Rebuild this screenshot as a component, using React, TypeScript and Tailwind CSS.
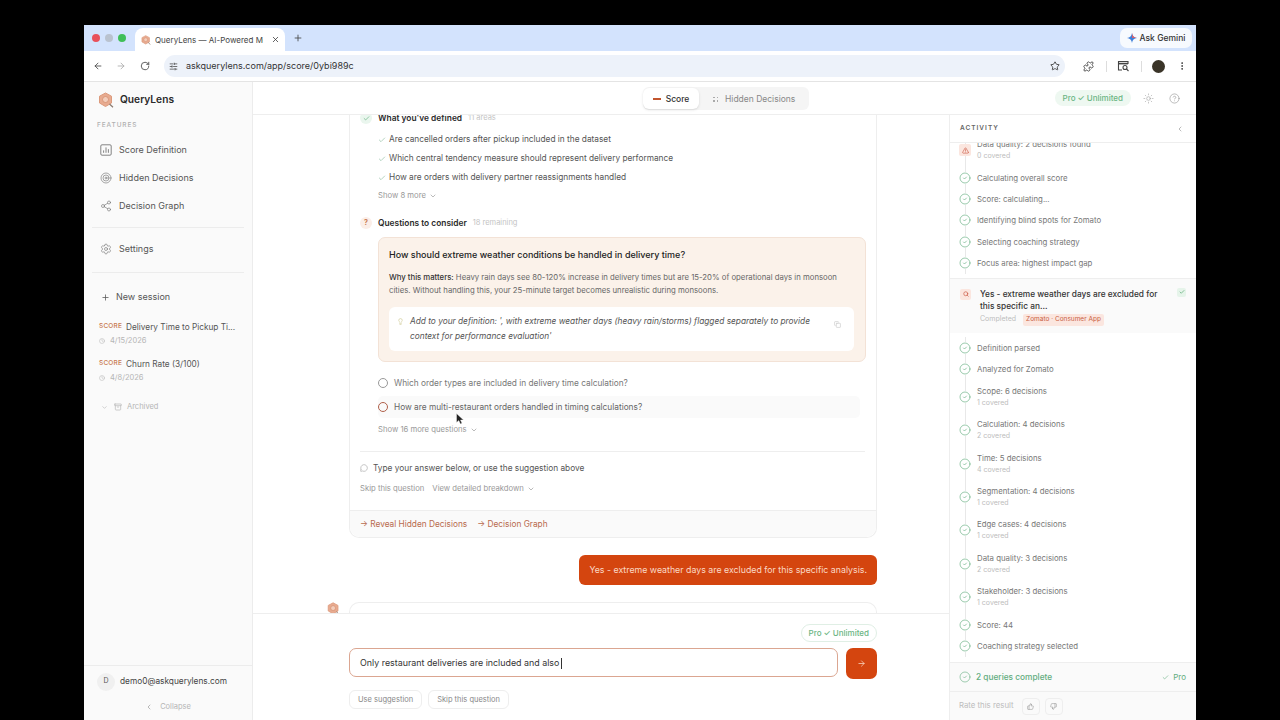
import React from 'react';
import {
  ArrowLeft, ArrowRight, Archive, Check, ChevronDown, ChevronLeft, CircleCheck, CircleHelp, Clock, Copy,
  EllipsisVertical, Lightbulb, MessageCircle, Plus, Puzzle, RotateCw, Search, Settings, Share2, SlidersHorizontal,
  Star, Sun, Target, ThumbsDown, ThumbsUp, TriangleAlert, X,
} from 'lucide-react';

const Logo = ({ size = 16 }: { size?: number }) => (
  <svg width={size} height={size} viewBox="0 0 16 16" fill="none">
    <path d="M7.5 1 L13.5 4.2 V11 L7.5 14.5 L1.5 11 V4.2 Z" fill="#e8ab90" stroke="#dc9a7c" strokeWidth="1" />
    <circle cx="7.5" cy="7.5" r="3" fill="#f3cdbb" stroke="#d08a6a" strokeWidth="0.7" />
    <path d="M11.5 12 L15 15.2" stroke="#8a7a70" strokeWidth="1.2" />
  </svg>
);

const ChartIcon = () => (
  <svg width="12" height="12" viewBox="0 0 12 12" fill="none" stroke="#777" strokeWidth="0.9">
    <rect x="0.8" y="0.8" width="10.4" height="10.4" rx="1.2" />
    <path d="M3.6 8.8V6.4M6 8.8V3.4M8.4 8.8V5.2" />
  </svg>
);

const TabSearchIcon = () => (
  <svg width="13" height="12" viewBox="0 0 13 12" fill="none" stroke="#444" strokeWidth="1.1">
    <path d="M5 10H1.5V1.5H11V4" />
    <path d="M1.5 3.6H11" strokeWidth="1.6" />
    <circle cx="8" cy="7.5" r="2" />
    <path d="M9.5 9L11.5 11" />
  </svg>
);

const NavItem = ({ icon, label }: { icon: React.ReactNode; label: string }) => (
  <div className="flex h-[28px] items-center pl-[16px] text-[9px] text-[#555]">
    <span className="flex w-[19px] shrink-0 items-center">{icon}</span>
    {label}
  </div>
);

const Session = ({ title, date }: { title: string; date: string }) => (
  <div className="flex h-[37px] flex-col pl-[15px]">
    <div className="flex h-[14px] items-center text-[8.25px] text-[#555]">
      <span className="mr-[4px] text-[6.5px] font-medium tracking-[0.2px] text-[#c8794f]">SCORE</span>
      {title}
    </div>
    <div className="mt-[1px] flex h-[12px] items-center text-[7.5px] text-[#b5b5b5]">
      <Clock size={6} className="mr-[5px]" />
      {date}
    </div>
  </div>
);

const Sidebar = () => (
  <aside className="flex w-[169px] shrink-0 flex-col border-r border-[#ececec] bg-[#fafafa]">
    <div className="flex h-[35px] items-center pl-[14px] pt-[1px] text-[10.2px] font-semibold text-[#2b2b2b]">
      <Logo />
      <span className="ml-[6px]">QueryLens</span>
    </div>
    <div className="mt-[3px] flex h-[12px] items-center pl-[13px] text-[6.5px] font-medium tracking-[0.9px] text-[#b0b0b0]">FEATURES</div>
    <div className="mt-[4px]">
      <NavItem icon={<ChartIcon />} label="Score Definition" />
      <NavItem icon={<Target size={12} color="#777" strokeWidth={1.3} />} label="Hidden Decisions" />
      <NavItem icon={<Share2 size={12} color="#777" strokeWidth={1.3} />} label="Decision Graph" />
    </div>
    <div className="mx-[8px] mt-[7px] h-px bg-[#ececec]" />
    <div className="mt-[7px]">
      <NavItem icon={<Settings size={12} color="#777" strokeWidth={1.3} />} label="Settings" />
    </div>
    <div className="mx-[8px] mt-[9px] h-px bg-[#ececec]" />
    <div className="mt-[14px] flex h-[20px] items-center pl-[17px] text-[9px] text-[#555]">
      <Plus size={9} color="#555" className="mr-[6px]" />
      New session
    </div>
    <div className="mt-[13px]">
      <Session title="Delivery Time to Pickup Ti..." date="4/15/2026" />
      <Session title="Churn Rate (3/100)" date="4/8/2026" />
    </div>
    <div className="mt-[6px] flex h-[14px] items-center pl-[17px] text-[7.5px] text-[#b5b5b5]">
      <ChevronDown size={7} className="mr-[6px]" />
      <Archive size={8} className="mr-[5px]" />
      Archived
    </div>
    <div className="mt-auto border-t border-[#ececec]">
      <div className="flex h-[31px] items-center pl-[13px] text-[8.3px] text-[#444]">
        <span className="mr-[5px] flex h-[18px] w-[18px] items-center justify-center rounded-full bg-[#f0f0f0] text-[7px] text-[#555]">D</span>
        demo0@askquerylens.com
      </div>
      <div className="flex h-[23px] items-center justify-center pb-[3px] text-[7.5px] text-[#b5b5b5]">
        <ChevronLeft size={8} className="mr-[7px] text-[#999]" />
        Collapse
      </div>
    </div>
  </aside>
);

const Chevron = () => <ChevronDown size={8} className="ml-[3px]" />;

const DefinedItem = ({ text }: { text: string }) => (
  <div className="flex h-[19px] items-center pl-[28px] text-[8.3px] text-[#555]">
    <Check size={8} color="#6aa984" className="mr-[3px]" strokeWidth={1.5} />
    {text}
  </div>
);

const Conversation = () => (
  <div className="relative min-h-0 flex-1 overflow-hidden">
    <div className="relative -mt-[4px] ml-[96px] w-[528px]">
      <div className="rounded-b-[10px] border-x border-b border-[#eeeeee]">
        <div className="flex h-[14px] items-center pl-[10px] text-[8.4px] font-semibold text-[#2a2a2a]">
          <span className="mr-[6px] flex h-[12px] w-[12px] items-center justify-center rounded-full bg-[#eaf6ee]">
            <Check size={7} color="#4fa36c" strokeWidth={2} />
          </span>
          What you've defined
          <span className="ml-[6px] text-[7.5px] font-normal text-[#c4c4c4]">11 areas</span>
        </div>
        <div className="mt-[5px]">
          <DefinedItem text="Are cancelled orders after pickup included in the dataset" />
          <DefinedItem text="Which central tendency measure should represent delivery performance" />
          <DefinedItem text="How are orders with delivery partner reassignments handled" />
        </div>
        <div className="mt-[2px] flex h-[14px] items-center pl-[28px] text-[7.7px] text-[#999]">
          Show 8 more
          <Chevron />
        </div>
        <div className="mt-[13px] flex h-[14px] items-center pl-[10px] text-[8.4px] font-semibold text-[#2a2a2a]">
          <span className="mr-[6px] flex h-[12px] w-[12px] items-center justify-center rounded-full bg-[#fbeee8] text-[7px] font-bold text-[#c8794f]">?</span>
          Questions to consider
          <span className="ml-[6px] text-[7.5px] font-normal text-[#c4c4c4]">18 remaining</span>
        </div>
        <div className="ml-[28px] mt-[7px] h-[125px] w-[488px] rounded-[7px] border border-[#f3e2d6] bg-[#fbf2ea] px-[10px]">
          <div className="mt-[10px] flex h-[14px] items-center text-[9px] font-medium text-[#222]">How should extreme weather conditions be handled in delivery time?</div>
          <div className="mt-[9px] text-[7.75px] leading-[13px] text-[#666]">
            <span className="font-medium text-[#333]">Why this matters:</span> Heavy rain days see 80-120% increase in delivery times but are 15-20% of operational days in monsoon cities. Without handling this, your 25-minute target becomes unrealistic during monsoons.
          </div>
          <div className="relative mt-[10px] h-[44px] w-[465px] rounded-[6px] bg-white pl-[21px] pr-[40px] pt-[7px] text-[8.3px] italic leading-[15px] text-[#555]">
            <Lightbulb size={7} color="#c9c48a" className="absolute left-[8px] top-[11px]" />
            Add to your definition: ', with extreme weather days (heavy rain/storms) flagged separately to provide context for performance evaluation'
            <Copy size={7} color="#c4c4c4" className="absolute right-[13px] top-[14px]" />
          </div>
        </div>
        <div className="mt-[10px] flex h-[22px] items-center pl-[28px] text-[8.3px] text-[#777]">
          <span className="mr-[6px] h-[10px] w-[10px] rounded-full border border-[#999]" />
          Which order types are included in delivery time calculation?
        </div>
        <div className="ml-[28px] mt-[2px] flex h-[22px] w-[482px] items-center rounded-[5px] bg-[#fafafa] text-[8.3px] text-[#666]">
          <span className="mr-[6px] h-[10px] w-[10px] rounded-full border border-[#b0604a]" />
          How are multi-restaurant orders handled in timing calculations?
        </div>
        <div className="mt-[5px] flex h-[14px] items-center pl-[28px] text-[7.7px] text-[#999]">
          Show 16 more questions
          <Chevron />
        </div>
        <div className="ml-[10px] mt-[14px] h-px w-[505px] bg-[#eeeeee]" />
        <div className="mt-[9px] flex h-[14px] items-center pl-[10px] text-[8.3px] text-[#555]">
          <MessageCircle size={8} color="#aaa" className="mr-[5px]" />
          Type your answer below, or use the suggestion above
        </div>
        <div className="mt-[7px] flex h-[14px] items-center pl-[10px] text-[7.7px] text-[#999]">
          <span className="mr-[8px]">Skip this question</span>
          View detailed breakdown
          <Chevron />
        </div>
        <div className="mt-[14px] flex h-[27px] items-center gap-[10px] rounded-b-[10px] border-t border-[#eeeeee] bg-[#fafafa] pl-[10px] text-[8.3px] text-[#b86a4e]">
          <span>→ Reveal Hidden Decisions</span>
          <span>→ Decision Graph</span>
        </div>
      </div>
      <div className="mt-[17px] flex justify-end">
        <div className="flex h-[30px] items-center rounded-[6px] bg-[#d4450f] px-[10px] text-[8.8px] text-[#fbd9c6]">Yes - extreme weather days are excluded for this specific analysis.</div>
      </div>
      <div className="relative mt-[17px] h-[40px] rounded-t-[10px] border-x border-t border-[#eeeeee]">
        <span className="absolute -left-[23px] -top-[1px]"><Logo size={13} /></span>
        <span className="absolute left-[10px] top-[8px] text-[9px] font-semibold text-[#444]">Z</span>
      </div>
    </div>
    <svg width="9" height="12" viewBox="0 0 9 12" className="absolute left-[203px] top-[298px]">
      <path d="M0.5 0.5 V9.5 L2.8 7.6 L4.4 11 L6 10.3 L4.5 7 H7.5 Z" fill="#222" stroke="#fff" strokeWidth="0.4" />
    </svg>
  </div>
);

const Composer = () => (
  <div className="h-[107px] shrink-0 border-t border-[#eeeeee] pl-[96px]">
    <div className="w-[528px]">
      <div className="mt-[10px] flex justify-end">
        <span className="flex h-[18px] items-center rounded-full border border-[#e0efe5] px-[7px] text-[8px] font-medium text-[#6bb583]">Pro ✓ Unlimited</span>
      </div>
      <div className="mt-[6px] flex gap-[8px]">
        <div className="flex h-[29px] w-[489px] items-center rounded-[7px] border-[1.5px] border-[#dba691] pl-[10px] pt-[1px] text-[8.9px] text-[#333]">
          Only restaurant deliveries are included and also
          <span className="ml-[2px] h-[11px] w-px bg-[#333]" />
        </div>
        <div className="flex h-[31px] w-[31px] items-center justify-center rounded-[7px] bg-[#d4450f]">
          <ArrowRight size={9} color="#fbd9c6" />
        </div>
      </div>
      <div className="mt-[11px] flex gap-[6px] text-[7.5px] text-[#888]">
        <span className="flex h-[19px] items-center rounded-[6px] border border-[#eeeeee] px-[8px]">Use suggestion</span>
        <span className="flex h-[19px] items-center rounded-[6px] border border-[#eeeeee] px-[8px]">Skip this question</span>
      </div>
    </div>
  </div>
);

const Step = ({ label, sub, warn }: { label: string; sub?: string; warn?: boolean }) => (
  <div className={`relative flex items-center pl-[9px] ${sub ? 'h-[33.4px]' : 'h-[21.4px]'}`}>
    <span className="absolute bottom-0 left-[14.5px] top-0 w-px bg-[#e8e8e8]" />
    {warn ? (
      <span className="relative mr-[5px] flex h-[12px] w-[12px] items-center justify-center rounded-[2px] bg-[#fbe6df]">
        <TriangleAlert size={7} color="#c9503a" strokeWidth={2} />
      </span>
    ) : (
      <CircleCheck size={12} color="#56a674" strokeWidth={1.2} className="relative mr-[5px] bg-white" />
    )}
    <div className="ml-[1px] text-[7.8px] text-[#777]">
      <div className="h-[12px] leading-[12px]">{label}</div>
      {sub && <div className="text-[7px] leading-[12px] text-[#bdbdbd]">{sub}</div>}
    </div>
  </div>
);

const Activity = () => (
  <aside className="flex w-[247px] shrink-0 flex-col border-l border-[#eeeeee] bg-white">
    <div className="flex h-[28px] shrink-0 items-center justify-between border-b border-[#eeeeee] pl-[10px] pr-[12px] text-[6.5px] font-semibold tracking-[1px] text-[#666]">
      ACTIVITY
      <ChevronLeft size={8} color="#999" />
    </div>
    <div className="min-h-0 flex-1 overflow-hidden">
      <div className="-mt-[9.5px]">
        <Step warn label="Data quality: 2 decisions found" sub="0 covered" />
        <Step label="Calculating overall score" />
        <Step label="Score: calculating..." />
        <Step label="Identifying blind spots for Zomato" />
        <Step label="Selecting coaching strategy" />
        <Step label="Focus area: highest impact gap" />
      </div>
      <div className="relative mt-[4px] h-[55px] border-t border-[#eeeeee] bg-[#fafafa] pl-[30px] pr-[20px] pt-[9px]">
        <span className="absolute left-[10px] top-[10px] flex h-[11px] w-[11px] items-center justify-center rounded-[2px] bg-[#fbe6df]">
          <Search size={6} color="#c9503a" strokeWidth={2.5} />
        </span>
        <span className="absolute right-[10px] top-[9px] flex h-[9px] w-[9px] items-center justify-center rounded-[2px] bg-[#e6f4ea]">
          <Check size={6} color="#4fa36c" strokeWidth={2.5} />
        </span>
        <div className="w-[182px] text-[8.3px] font-medium leading-[12px] text-[#333]">Yes - extreme weather days are excluded for this specific an...</div>
        <div className="mt-[2px] flex items-center text-[7px] text-[#bdbdbd]">
          Completed
          <span className="ml-[7px] rounded-[2px] bg-[#fbe6df] px-[3px] py-[1px] text-[6.5px] text-[#c9603f]">Zomato · Consumer App</span>
        </div>
      </div>
      <div className="mt-[4.5px]">
        <Step label="Definition parsed" />
        <Step label="Analyzed for Zomato" />
        <Step label="Scope: 6 decisions" sub="1 covered" />
        <Step label="Calculation: 4 decisions" sub="2 covered" />
        <Step label="Time: 5 decisions" sub="4 covered" />
        <Step label="Segmentation: 4 decisions" sub="1 covered" />
        <Step label="Edge cases: 4 decisions" sub="1 covered" />
        <Step label="Data quality: 3 decisions" sub="2 covered" />
        <Step label="Stakeholder: 3 decisions" sub="1 covered" />
        <Step label="Score: 44" />
        <Step label="Coaching strategy selected" />
      </div>
    </div>
    <div className="flex h-[29px] shrink-0 items-center justify-between border-t border-[#eeeeee] bg-[#fafafa] pl-[9px] pr-[10px] text-[8.3px] font-medium text-[#62ad7e]">
      <span className="flex items-center">
        <CircleCheck size={12} strokeWidth={1.2} className="mr-[5px]" />
        2 queries complete
      </span>
      <span className="flex items-center text-[8px] font-normal">
        <Check size={7} className="mr-[4px]" />
        Pro
      </span>
    </div>
    <div className="flex h-[29px] shrink-0 items-center border-t border-[#eeeeee] bg-[#fafafa] pl-[9px] text-[7.8px] text-[#bdbdbd]">
      Rate this result
      <span className="ml-[8px] flex h-[17px] w-[18px] items-center justify-center rounded-[4px] border border-[#eeeeee]">
        <ThumbsUp size={7} color="#999" />
      </span>
      <span className="ml-[5px] flex h-[17px] w-[18px] items-center justify-center rounded-[4px] border border-[#eeeeee]">
        <ThumbsDown size={7} color="#999" />
      </span>
    </div>
  </aside>
);

const TopBar = () => (
  <header className="relative flex h-[33px] shrink-0 items-center justify-end border-b border-[#eeeeee] bg-white pr-[16px]">
    <div className="absolute left-[390px] top-[5px] flex h-[23px] items-center rounded-[6px] bg-[#f5f5f5] text-[8.5px]">
      <div className="flex h-[21px] w-[56px] items-center justify-center rounded-[6px] bg-white pt-px font-medium text-[#333] shadow-sm">
        <span className="mr-[5px] h-[2px] w-[8px] bg-[#c2552e]" />
        Score
      </div>
      <div className="flex items-center pl-[14px] pr-[14px] pt-px text-[#888]">
        <span className="mr-[7px] grid grid-cols-2 gap-[2px]">
          <i className="h-[1.5px] w-[1.5px] bg-[#aaa]" /><i className="h-[1.5px] w-[1.5px] bg-[#aaa]" />
          <i className="h-[1.5px] w-[1.5px] bg-[#aaa]" /><i className="h-[1.5px] w-[1.5px] bg-[#aaa]" />
        </span>
        Hidden Decisions
      </div>
    </div>
    <span className="flex h-[16px] items-center rounded-full bg-[#eef8f1] px-[8px] text-[8px] font-medium text-[#6bb583]">Pro ✓ Unlimited</span>
    <Sun size={11} color="#999" strokeWidth={1.2} className="ml-[12px]" />
    <CircleHelp size={11} color="#888" strokeWidth={1.2} className="ml-[15px]" />
  </header>
);

const BrowserChrome = () => (
  <>
    <div className="flex h-[26px] shrink-0 items-end bg-[#d3e3fd] pl-[8px]">
      <div className="mb-[9px] flex gap-[5px]">
        <span className="h-[8px] w-[8px] rounded-full bg-[#e8505b]" />
        <span className="h-[8px] w-[8px] rounded-full bg-[#b9c2cf]" />
        <span className="h-[8px] w-[8px] rounded-full bg-[#3fbf58]" />
      </div>
      <div className="ml-[9px] flex h-[23px] w-[150px] items-center rounded-t-[8px] bg-white pl-[6px] text-[8px] text-[#444]">
        <Logo size={10} />
        <span className="ml-[4px] w-[108px] overflow-hidden whitespace-nowrap">QueryLens — AI-Powered Me</span>
        <X size={9} color="#333" strokeWidth={2} className="ml-[8px]" />
      </div>
      <Plus size={10} color="#444" className="mb-[8px] ml-[8px]" />
      <div className="mb-[3px] ml-auto mr-[4px] flex h-[20px] w-[72px] items-center justify-center rounded-[7px] bg-[#f7fafe] text-[8.5px] font-medium text-[#333]">
        <svg width="10" height="10" viewBox="0 0 10 10" className="mr-[3px]">
          <path d="M5 0 C5.4 3 7 4.6 10 5 C7 5.4 5.4 7 5 10 C4.6 7 3 5.4 0 5 C3 4.6 4.6 3 5 0 Z" fill="#3f7fd8" />
          <path d="M5 0 C5.4 3 7 4.6 10 5 H5 Z" fill="#d9606a" />
        </svg>
        Ask Gemini
      </div>
    </div>
    <div className="flex h-[31px] shrink-0 items-center border-b border-[#e4e4e4] bg-white pl-[9px]">
      <ArrowLeft size={10} color="#444" />
      <ArrowRight size={10} color="#aaa" className="ml-[13px]" />
      <RotateCw size={10} color="#444" className="ml-[14px]" />
      <div className="ml-[14px] flex h-[22px] w-[901px] items-center justify-between rounded-full bg-[#edf2fa] pl-[5px] pr-[5px] text-[9px] text-[#333]">
        <span className="flex items-center">
          <SlidersHorizontal size={9} color="#444" className="mr-[8px]" />
          askquerylens.com/app/score/0ybi989c
        </span>
        <Star size={10} color="#333" />
      </div>
      <Puzzle size={11} color="#444" className="ml-[18px]" />
      <span className="ml-[12px] h-[11px] w-px bg-[#ddd]" />
      <span className="ml-[10px]"><TabSearchIcon /></span>
      <span className="ml-[11px] h-[11px] w-px bg-[#ddd]" />
      <span className="ml-[10px] h-[13px] w-[13px] rounded-full bg-[#3a3428]" />
      <EllipsisVertical size={10} color="#333" className="ml-[12px]" />
    </div>
  </>
);

export default function App() {
  return (
    <div className="flex h-[720px] w-[1280px] flex-col overflow-hidden bg-black px-[84px] pt-[25px] [font-family:Inter,sans-serif]">
      <BrowserChrome />
      <div className="flex min-h-0 flex-1">
        <Sidebar />
        <main className="flex min-w-0 flex-1 flex-col bg-white">
          <TopBar />
          <div className="flex min-h-0 flex-1">
            <div className="flex min-w-0 flex-1 flex-col">
              <Conversation />
              <Composer />
            </div>
            <Activity />
          </div>
        </main>
      </div>
    </div>
  );
}
